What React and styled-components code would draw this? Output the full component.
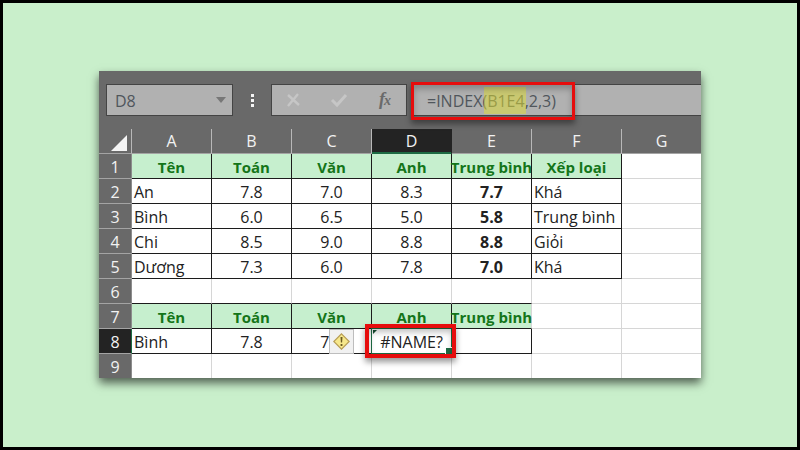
import React, { useState } from 'react';
import styled, { createGlobalStyle, css } from 'styled-components';

const GlobalStyle = createGlobalStyle`
  * {
    box-sizing: border-box;
  }

  body {
    margin: 0;
    font-family: "Open Sans", "Noto Sans", sans-serif;
    font-size: 16px;
  }

  button, input {
    font: inherit;
  }
`;

const Frame = styled.main`
  min-height: 100vh;
  padding: 68px 96px;
  border: 3px solid #000;
  background-color: #c9efcb;
`;

const Sheet = styled.section`
  background-color: #696969;
  box-shadow: 0 5px 9px rgba(0, 0, 0, 0.6);
`;

const FormulaBar = styled.div`
  display: flex;
  align-items: center;
  padding: 13px 0 13px 7px;
`;

const Field = styled.div`
  position: relative;
  display: flex;
  align-items: center;
  height: 32px;
  border: 1px solid #444;
  background-color: #b1b1b1;
`;

const NameBox = styled(Field)`
  width: 127px;
  padding: 0 6px 0 8px;
`;

const ToolBox = styled(Field)`
  width: 136px;
  justify-content: space-between;
  padding: 0 10px 0 12px;
  margin-right: 4px;
`;

const FormulaBox = styled(Field)`
  flex: 1;
  padding-left: 15px;
  border-right: 0;
`;

const TextInput = styled.input`
  flex: 1;
  min-width: 0;
  height: 30px;
  padding: 2px 0 0;
  border: 0;
  outline: 0;
  background: transparent;
  color: #50565c;
`;

const IconButton = styled.button`
  display: flex;
  padding: 0;
  border: 0;
  background: transparent;
  cursor: pointer;
`;

const Grip = styled.div`
  display: flex;
  flex-direction: column;
  align-items: center;
  gap: 2px;
  width: 38px;

  span {
    width: 3px;
    height: 3px;
    background-color: #f4f4f4;
  }
`;

const Highlight = styled.span`
  position: absolute;
  top: 2px;
  left: 72px;
  width: 42px;
  height: 27px;
  background-color: rgba(226, 224, 50, 0.5);
  pointer-events: none;
`;

const Callout = styled.span`
  position: absolute;
  z-index: 3;
  border: 3px solid #e60d0d;
  box-shadow: 0 4px 6px rgba(0, 0, 0, 0.4), inset 0 4px 6px rgba(0, 0, 0, 0.25);
  pointer-events: none;
`;

const FormulaCallout = styled(Callout)`
  top: -3px;
  left: -1px;
  width: 164px;
  height: 38px;
`;

const CellCallout = styled(Callout)`
  top: -5px;
  left: -7px;
  width: 91px;
  height: 34px;
  border-width: 4px;
`;

const Grid = styled.table`
  width: 100%;
  table-layout: fixed;
  border-collapse: separate;
  border-spacing: 0;
  background-color: #fff;
`;

const Col = styled.col`
  width: ${(props) => props.$width || 'auto'};
`;

const Corner = styled.td`
  height: 25px;
  padding: 3px 4px 0 0;
  border-right: 1px solid #b8b8b8;
  border-bottom: 1px solid #a4a4a4;
  background-color: #696969;

  button {
    margin-left: auto;
  }
`;

const HeadCell = styled.th`
  height: 25px;
  padding: 0;
  border-bottom: 1px solid #a4a4a4;
  background-color: #696969;
  color: #f2f2f2;
  font-weight: 400;
  line-height: 24px;
`;

const ColumnHead = styled(HeadCell)`
  border-right: 1px solid #b8b8b8;

  &:last-child {
    border-right: 0;
  }

  ${(props) => props.$active && css`
    border-right-color: #232323;
    border-bottom-color: #1d6b43;
    background-color: #232323;
    box-shadow: inset 0 -1px #1d6b43;
  `}
`;

const RowHead = styled(HeadCell)`
  border-right: 1px solid #8c8c8c;

  ${(props) => props.$active && css`
    border-right-color: #1d6b43;
    background-color: #232323;
  `}

  tr:last-child > & {
    height: 24px;
    border-bottom: 0;
  }
`;

const Cell = styled.td`
  position: relative;
  height: 25px;
  padding: 0;
  border-right: 1px solid ${(props) => (props.$right ? '#1c1c1c' : '#d6d6d6')};
  border-bottom: 1px solid ${(props) => (props.$bottom ? '#1c1c1c' : '#d6d6d6')};
  background-color: ${(props) => (props.$title ? '#c6efce' : '#fff')};
  color: ${(props) => (props.$title ? '#147519' : '#222')};
  font-size: ${(props) => (props.$title ? '15px' : '16px')};
  font-weight: ${(props) => (props.$bold ? 700 : 400)};

  &:last-child {
    border-right: 0;
  }

  tr:last-child > & {
    height: 24px;
    border-bottom: 0;
  }
`;

const CellText = styled.div`
  display: flex;
  justify-content: ${(props) => (props.$left ? 'flex-start' : 'center')};
  height: 24px;
  padding-left: ${(props) => (props.$left ? '2px' : '0')};
  line-height: 26px;
  white-space: nowrap;
`;

const Selection = styled.span`
  position: absolute;
  z-index: 2;
  top: -1px;
  right: -1px;
  bottom: -1px;
  left: -1px;
  border: 1px solid #1d6b43;
  pointer-events: none;

  &::before {
    content: "";
    position: absolute;
    top: 1px;
    left: 1px;
    border-top: 4px solid #174f33;
    border-right: 4px solid transparent;
  }

  &::after {
    content: "";
    position: absolute;
    right: -1px;
    bottom: -1px;
    width: 6px;
    height: 6px;
    border-top: 1px solid #fff;
    border-left: 1px solid #fff;
    background-color: #1d6b43;
  }
`;

const WarningButton = styled(IconButton)`
  position: absolute;
  z-index: 1;
  top: 0;
  left: 37px;
  align-items: center;
  justify-content: center;
  width: 25px;
  height: 25px;
  border: 1px solid #bdbdbd;
  background-color: #f1f1f1;
`;

const columns = ['A', 'B', 'C', 'D', 'E', 'F', 'G'];

const rows = [
  ['Tên', 'Toán', 'Văn', 'Anh', 'Trung bình', 'Xếp loại', ''],
  ['An', '7.8', '7.0', '8.3', '7.7', 'Khá', ''],
  ['Bình', '6.0', '6.5', '5.0', '5.8', 'Trung bình', ''],
  ['Chi', '8.5', '9.0', '8.8', '8.8', 'Giỏi', ''],
  ['Dương', '7.3', '6.0', '7.8', '7.0', 'Khá', ''],
  ['', '', '', '', '', '', ''],
  ['Tên', 'Toán', 'Văn', 'Anh', 'Trung bình', '', ''],
  ['Bình', '7.8', '7.0', '#NAME?', '', '', ''],
  ['', '', '', '', '', '', ''],
];

// the first table is A1:F5, the second one A7:E8
const getCellStyle = (row, col) => {
  const inFirst = row <= 5 && col < 6;
  const inSecond = (row === 7 || row === 8) && col < 5;
  const title = (row === 1 && inFirst) || (row === 7 && inSecond);

  return {
    $title: title,
    $bold: title || (col === 4 && row <= 5),
    $right: inFirst || (inSecond && !(row === 7 && col === 4)),
    $bottom: inFirst || inSecond || (row === 6 && col < 5),
  };
};

const App = () => {
  const [name, setName] = useState('D8');
  const [formula, setFormula] = useState('=INDEX(B1E4,2,3)');

  return (
    <Frame>
      <GlobalStyle />
      <Sheet>
        <FormulaBar>
          <NameBox>
            <TextInput aria-label="Name box" value={name} onChange={(e) => setName(e.target.value)} />
            <IconButton type="button" aria-label="Open name list">
              <svg width="10" height="6" viewBox="0 0 10 6"><path d="M0 0h10L5 6z" fill="#777" /></svg>
            </IconButton>
          </NameBox>
          <Grip>
            <span />
            <span />
            <span />
          </Grip>
          <ToolBox>
            <IconButton type="button" aria-label="Cancel">
              <svg width="18" height="18" viewBox="0 0 18 18">
                <path d="M4 4l11 10M14 3L4 15" fill="none" stroke="#c6c6c6" strokeWidth="2.4" />
              </svg>
            </IconButton>
            <IconButton type="button" aria-label="Enter">
              <svg width="18" height="18" viewBox="0 0 18 18">
                <path d="M2 9l5 5L16 4" fill="none" stroke="#c6c6c6" strokeWidth="3" />
              </svg>
            </IconButton>
            <IconButton type="button" aria-label="Insert function">
              <svg width="20" height="24" viewBox="0 0 20 24" fill="#6a6a6a">
                <text x="3" y="17" fontFamily="Liberation Serif, serif" fontSize="18" fontStyle="italic" fontWeight="700">f</text>
                <text x="8" y="17" fontFamily="Liberation Serif, serif" fontSize="14" fontStyle="italic" fontWeight="700">x</text>
              </svg>
            </IconButton>
          </ToolBox>
          <FormulaBox>
            <TextInput aria-label="Formula" value={formula} onChange={(e) => setFormula(e.target.value)} />
            <Highlight />
            <FormulaCallout />
          </FormulaBox>
        </FormulaBar>

        <Grid>
          <colgroup>
            <Col $width="33px" />
            {columns.map((letter) => (
              <Col key={letter} $width={letter === 'G' ? 'auto' : letter === 'F' ? '90px' : '80px'} />
            ))}
          </colgroup>
          <thead>
            <tr>
              <Corner>
                <IconButton type="button" aria-label="Select all">
                  <svg width="16" height="16" viewBox="0 0 16 16"><path d="M16 0v16H0z" fill="#f4f4f4" /></svg>
                </IconButton>
              </Corner>
              {columns.map((letter) => (
                <ColumnHead key={letter} scope="col" $active={letter === 'D'}>{letter}</ColumnHead>
              ))}
            </tr>
          </thead>
          <tbody>
            {rows.map((values, i) => {
              const row = i + 1;
              return (
                <tr key={row}>
                  <RowHead scope="row" $active={row === 8}>
                    <CellText>{row}</CellText>
                  </RowHead>
                  {values.map((value, col) => {
                    const cellStyle = getCellStyle(row, col);
                    return (
                      <Cell key={columns[col]} {...cellStyle}>
                        <CellText $left={!cellStyle.$title && (col === 0 || col === 5)}>
                          {value}
                        </CellText>
                        {row === 8 && col === 2 && (
                          <WarningButton type="button" aria-label="Formula error">
                            <svg width="17" height="17" viewBox="0 0 17 17">
                              <path d="M8.5 0.8l7.7 7.7-7.7 7.7L0.8 8.5z" fill="#f6e78b" stroke="#b79d55" strokeWidth="1.2" />
                              <path d="M7.5 4h2l-.4 5.6H7.9zM7.6 11h1.8v2H7.6z" fill="#6b5a23" />
                            </svg>
                          </WarningButton>
                        )}
                        {row === 8 && col === 3 && (
                          <>
                            <Selection />
                            <CellCallout />
                          </>
                        )}
                      </Cell>
                    );
                  })}
                </tr>
              );
            })}
          </tbody>
        </Grid>
      </Sheet>
    </Frame>
  );
};

export default App;
